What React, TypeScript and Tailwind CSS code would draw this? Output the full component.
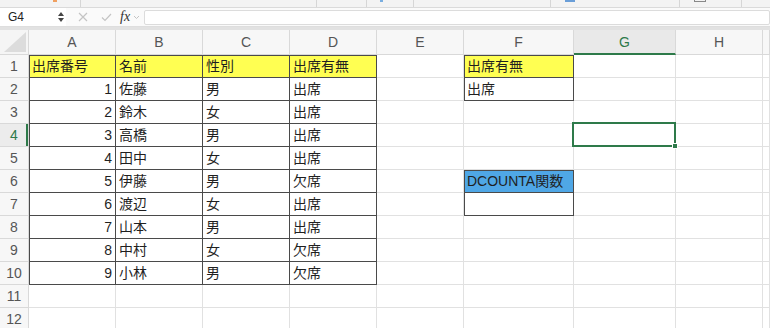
import React from "react";

const FONT = { fontFamily: '"Liberation Sans", "Noto Sans CJK JP", sans-serif' };

const colLetters = ["A", "B", "C", "D", "E", "F", "G", "H", ""];

type Cell = { v: string; num?: boolean; fill?: "yellow" | "blue" };

const tableRows: string[][] = [
  ["出席番号", "名前", "性別", "出席有無"],
  ["1", "佐藤", "男", "出席"],
  ["2", "鈴木", "女", "出席"],
  ["3", "高橋", "男", "出席"],
  ["4", "田中", "女", "出席"],
  ["5", "伊藤", "男", "欠席"],
  ["6", "渡辺", "女", "出席"],
  ["7", "山本", "男", "出席"],
  ["8", "中村", "女", "欠席"],
  ["9", "小林", "男", "欠席"],
];

// row index 1..12, col index 0..8 (A..H + filler)
function getCell(r: number, c: number): Cell | null {
  if (r <= 10 && c <= 3) {
    const v = tableRows[r - 1][c];
    return { v, num: r > 1 && c === 0, fill: r === 1 ? "yellow" : undefined };
  }
  if (c === 5) {
    if (r === 1) return { v: "出席有無", fill: "yellow" };
    if (r === 2) return { v: "出席" };
    if (r === 6) return { v: "DCOUNTA関数", fill: "blue" };
    if (r === 7) return { v: "" };
  }
  return null;
}

function isBoxTop(r: number, c: number) {
  if (c <= 3 && r === 1) return true;
  if (c === 5 && (r === 1 || r === 6)) return true;
  return false;
}

function GridCell({ r, c }: { r: number; c: number }) {
  const cell = getCell(r, c);
  const bordered = cell !== null;
  const left = bordered && (c === 0 || c === 5);
  const top = bordered && isBoxTop(r, c);
  let shadow = "";
  if (left && top) shadow = "shadow-[inset_1px_1px_0_#4a4a4a]";
  else if (left) shadow = "shadow-[inset_1px_0_0_#4a4a4a]";
  else if (top) shadow = "shadow-[inset_0_1px_0_#4a4a4a]";
  const fill =
    cell?.fill === "yellow"
      ? "bg-[#ffff52]"
      : cell?.fill === "blue"
      ? "bg-[#4fa7e6]"
      : "bg-white";
  const border = bordered ? "border-[#4a4a4a]" : "border-[#e1e1e1]";
  const selected = r === 4 && c === 6;
  return (
    <div
      className={`relative h-[23px] border-r border-b ${border} ${fill} ${shadow} px-[3px] text-[14px] leading-[22px] text-[#1f1f1f] whitespace-nowrap overflow-visible ${
        cell?.num ? "text-right" : "text-left"
      }`}
    >
      {cell?.v}
      {selected && (
        <div className="absolute -left-[2px] -top-[2px] -right-[1px] -bottom-[1px] border-2 border-[#2e7a4a] z-10">
          <div className="absolute -right-[4px] -bottom-[4px] w-[6px] h-[6px] bg-[#2e7a4a] border border-white" />
        </div>
      )}
    </div>
  );
}

export default function App() {
  const rows = Array.from({ length: 12 }, (_, i) => i + 1);
  return (
    <div className="w-[770px] h-[328px] overflow-hidden bg-white" style={FONT}>
      {/* ribbon remnant */}
      <div className="flex h-[8px] bg-[#f3f3f3] border-b border-[#dadada]">
        <div className="w-[81px] border-r border-[#d6d6d6] relative">
          <div className="absolute left-[53px] top-0 w-[4px] h-[2px] bg-[#f0a060]" />
        </div>
        <div className="w-[236px] border-r border-[#d6d6d6]" />
        <div className="w-[50px] border-r border-[#d6d6d6]" />
        <div className="w-[47px] border-r border-[#d6d6d6] relative">
          <div className="absolute left-[13px] top-0 w-[3px] h-[2px] bg-[#7aaee0]" />
        </div>
        <div className="w-[137px] border-r border-[#d6d6d6]" />
        <div className="w-[129px] border-r border-[#d6d6d6] relative">
          <div className="absolute left-[14px] top-0 w-[10px] h-[2px] bg-[#6a9ed8]" />
        </div>
        <div className="w-[62px] border-r border-[#d6d6d6] relative">
          <div className="absolute left-[14px] top-0 w-[12px] h-[2px] border-b border-x border-[#888]" />
        </div>
        <div className="flex-1" />
      </div>

      {/* formula bar */}
      <div className="flex items-center h-[19px] bg-[#fafafa] border-b border-[#dedede]">
        <div className="flex items-center w-[66px] h-full bg-white pl-[8px] pr-[2px]">
          <span className="flex-1 text-[12px] text-[#222]">G4</span>
          <div className="flex flex-col items-center gap-[2px]">
            <svg width="6" height="4" viewBox="0 0 6 4"><path d="M0 4 L3 0 L6 4 Z" fill="#444" /></svg>
            <svg width="6" height="4" viewBox="0 0 6 4"><path d="M0 0 L3 4 L6 0 Z" fill="#444" /></svg>
          </div>
        </div>
        <div className="w-[12px]" />
        <svg width="10" height="10" viewBox="0 0 10 10" className="mr-[13px]">
          <path d="M1 1 L9 9 M9 1 L1 9" stroke="#c4c4c4" strokeWidth="1.2" />
        </svg>
        <svg width="11" height="9" viewBox="0 0 11 9" className="mr-[8px]">
          <path d="M1 4.5 L4 7.5 L10 1" stroke="#c4c4c4" strokeWidth="1.2" fill="none" />
        </svg>
        <span
          className="text-[14px] italic text-[#333] leading-none"
          style={{ fontFamily: '"Liberation Serif", serif' }}
        >
          fx
        </span>
        <svg width="7" height="5" viewBox="0 0 7 5" className="ml-[3px] mr-[4px]">
          <path d="M1 1 L3.5 3.5 L6 1" stroke="#c4c4c4" strokeWidth="1" fill="none" />
        </svg>
        <div className="flex-1 h-[15px] bg-white border border-[#dcdcdc] rounded-[2px]" />
      </div>
      <div className="h-[3px] bg-[#e2e2e2]" />

      {/* grid */}
      <div className="grid grid-cols-[29px_87px_87px_87px_87px_87px_110px_102px_87px_1fr]">
        {/* header row */}
        <div className="relative h-[25px] bg-[#f5f5f5] border-r border-b border-[#d9d9d9] overflow-hidden">
          <svg width="22" height="20" viewBox="0 0 22 20" className="absolute right-[2px] bottom-[2px]">
            <path d="M22 0 L22 20 L0 20 Z" fill="#dcdcdc" />
          </svg>
        </div>
        {colLetters.map((l, i) =>
          i === 6 ? (
            <div
              key={l}
              className="h-[25px] bg-[#e9e9e9] border-r border-[#d9d9d9] border-b-2 border-b-[#2e7a4a] text-center text-[14px] leading-[25px] text-[#2e7a4a]"
            >
              {l}
            </div>
          ) : (
            <div
              key={l + i}
              className="h-[25px] bg-[#f7f7f7] border-r border-b border-[#d9d9d9] text-center text-[14px] leading-[25px] text-[#555]"
            >
              {l}
            </div>
          )
        )}

        {rows.map((r) => (
          <React.Fragment key={r}>
            {r === 4 ? (
              <div className="h-[23px] bg-[#ececec] border-r border-b border-[#d9d9d9] shadow-[inset_-2px_0_0_#2e7a4a] text-center text-[14px] leading-[23px] text-[#2e7a4a]">
                {r}
              </div>
            ) : (
              <div className="h-[23px] bg-[#f7f7f7] border-r border-b border-[#d9d9d9] text-center text-[14px] leading-[23px] text-[#555]">
                {r}
              </div>
            )}
            {colLetters.map((_, c) => (
              <GridCell key={c} r={r} c={c} />
            ))}
          </React.Fragment>
        ))}
      </div>
    </div>
  );
}
